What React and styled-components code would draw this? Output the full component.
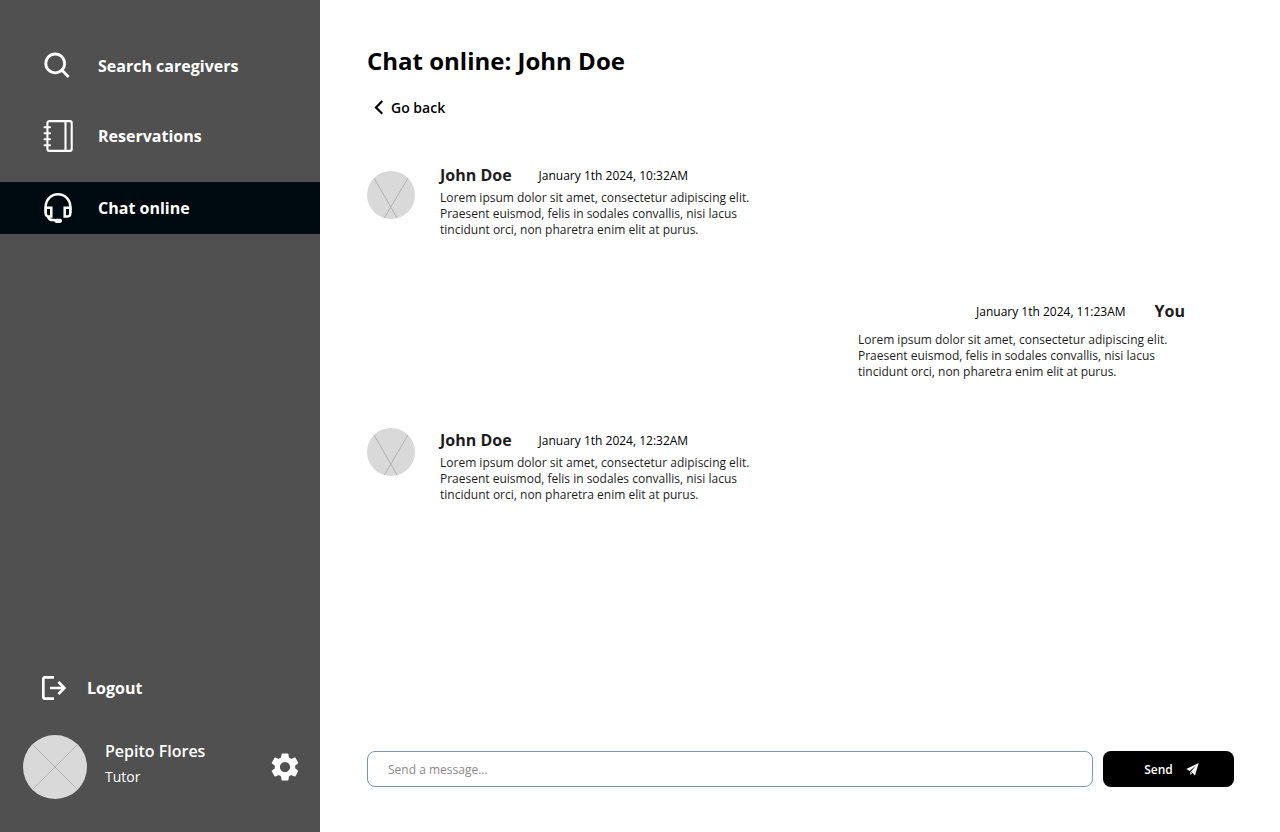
import React from "react";
import styled, { createGlobalStyle } from "styled-components";
import { MdSettings } from "react-icons/md";

const GlobalStyle = createGlobalStyle`
  *, *::before, *::after { box-sizing: border-box; }
  body {
    margin: 0;
    background: #fff;
    color: #000;
    font-family: "Open Sans", "Noto Sans", sans-serif;
  }
  button, input { font: inherit; color: inherit; }
  h1, h2, p, ul { margin: 0; padding: 0; }
  svg { display: block; flex: none; }
`;

const Page = styled.div`
  display: flex;
  min-height: 100vh;
`;

const Sidebar = styled.aside`
  flex: none;
  width: 320px;
  display: flex;
  flex-direction: column;
  justify-content: space-between;
  padding: 42px 0 33px;
  background: #505050;
  color: #fff;
`;

const NavList = styled.ul`
  list-style: none;
  display: flex;
  flex-direction: column;
  gap: 22px;
`;

const NavLink = styled.a`
  display: flex;
  align-items: center;
  gap: 24px;
  height: ${(p) => (p.$active ? "52px" : "48px")};
  padding-left: 42px;
  background: ${(p) => (p.$active ? "#000b11" : "transparent")};
  color: #fff;
  font-size: 16px;
  font-weight: 700;
  line-height: 22px;
  text-decoration: none;
`;

const SidebarFooter = styled.div`
  display: flex;
  flex-direction: column;
  gap: 35px;
`;

const LogoutButton = styled.button`
  align-self: flex-start;
  display: flex;
  align-items: center;
  gap: 21px;
  margin-left: 42px;
  padding: 0;
  border: 0;
  background: none;
  font-size: 16px;
  font-weight: 700;
  line-height: 22px;
  cursor: pointer;
`;

const Profile = styled.div`
  display: flex;
  align-items: center;
  padding: 0 18px 0 23px;
`;

const ProfileText = styled.div`
  flex: 1;
  display: flex;
  flex-direction: column;
  gap: 5px;
  padding: 0 0 7px 18px;
`;

const ProfileName = styled.p`
  font-size: 16px;
  font-weight: 600;
  line-height: 22px;
`;

const ProfileRole = styled.p`
  font-size: 14px;
  line-height: 20px;
`;

const IconButton = styled.button`
  padding: 0;
  border: 0;
  background: none;
  cursor: pointer;
`;

const Main = styled.main`
  flex: 1;
  min-width: 0;
  display: flex;
  flex-direction: column;
  padding: 45px 46px 45px 47px;
`;

const Title = styled.h1`
  font-size: 24px;
  font-weight: 700;
  line-height: 32px;
`;

const BackLink = styled.a`
  align-self: flex-start;
  display: flex;
  align-items: center;
  gap: 8px;
  margin: 21px 0 45px 7px;
  color: #000;
  font-size: 14px;
  font-weight: 600;
  line-height: 20px;
  text-decoration: none;
`;

const Thread = styled.section`
  flex: 1;
  display: flex;
  flex-direction: column;
  gap: 48px;
  padding-bottom: 48px;
`;

const Message = styled.article`
  display: flex;
  align-items: flex-start;
  gap: 25px;
  align-self: ${(p) => (p.$own ? "flex-end" : "flex-start")};
  padding: ${(p) => (p.$own ? "13px 49px 0 0" : "0")};
`;

const AvatarSlot = styled.div`
  padding-top: ${(p) => (p.$lowered ? "8px" : "0")};
`;

const MessageBody = styled.div`
  width: 327px;
  display: flex;
  flex-direction: column;
  gap: ${(p) => (p.$own ? "10px" : "4px")};
  padding-top: 1px;
  color: #1d1d1d;
`;

const MessageHeader = styled.header`
  display: flex;
  flex-direction: ${(p) => (p.$own ? "row-reverse" : "row")};
  align-items: center;
  gap: ${(p) => (p.$own ? "29px" : "27px")};
`;

const Author = styled.h2`
  font-size: 16px;
  font-weight: 700;
  line-height: 22px;
`;

const Time = styled.time`
  padding-top: 2px;
  color: #000;
  font-size: 12px;
  line-height: 16px;
`;

const MessageText = styled.p`
  font-size: 12px;
  line-height: 16px;
`;

const Composer = styled.form`
  display: flex;
  gap: 10px;
`;

const MessageInput = styled.input`
  flex: 1;
  min-width: 0;
  height: 36px;
  padding: 0 20px;
  border: 1px solid #7c97ae;
  border-radius: 8px;
  background: #fff;
  font-size: 12px;
  &::placeholder { color: #8a8a8a; opacity: 1; }
`;

const SendButton = styled.button`
  display: flex;
  align-items: center;
  justify-content: center;
  gap: 13px;
  width: 131px;
  height: 36px;
  padding: 2px 0 0 6px;
  border: 0;
  border-radius: 8px;
  background: #000;
  color: #fff;
  font-size: 12px;
  font-weight: 600;
  line-height: 16px;
  cursor: pointer;
`;

const SearchIcon = () => (
  <svg width="32" height="32" viewBox="0 0 32 32" fill="none" stroke="#fff" strokeWidth="2.8" aria-hidden="true">
    <circle cx="13.2" cy="13.4" r="9.4" />
    <path d="M19.8 20.1L26.6 26.9" />
  </svg>
);

const NotebookIcon = () => (
  <svg width="32" height="32" viewBox="0 0 32 32" fill="none" stroke="#fff" strokeWidth="2.1" aria-hidden="true">
    <rect x="5.4" y="1.1" width="24.3" height="29.8" rx="1.8" />
    <path d="M23.5 1V31" />
    <path d="M2.6 7.3H8M2.6 13.3H8M2.6 19.3H8M2.6 25.3H8" strokeLinecap="round" />
  </svg>
);

const HeadsetIcon = () => (
  <svg width="32" height="32" viewBox="0 0 32 32" fill="none" stroke="#fff" strokeWidth="2.5" aria-hidden="true">
    <path d="M3.7 21V14.6A12.2 12.2 0 0 1 28.3 14.6V21" />
    <path d="M3.7 15.8H9.3V24.4H6.5Q3.7 24.4 3.7 21.6Z" />
    <path d="M28.3 15.8H22.7V24.4H25.5Q28.3 24.4 28.3 21.6Z" />
    <path d="M6 24.6Q7 28.1 10.8 28.1H13" />
    <path d="M14.3 28.8H18" strokeWidth="4.2" strokeLinecap="round" />
  </svg>
);

const LogoutIcon = () => (
  <svg width="24" height="24" viewBox="0 0 24 24" fill="none" stroke="#fff" strokeWidth="2.7" aria-hidden="true">
    <path d="M12 1.3H3Q1.3 1.3 1.3 3V21Q1.3 22.7 3 22.7H12" />
    <path d="M8 12H22M16.4 5.9L22.3 12L16.4 18.1" />
  </svg>
);

const ChevronIcon = () => (
  <svg width="9" height="16" viewBox="0 0 9 16" fill="none" stroke="#000" strokeWidth="2.2" aria-hidden="true">
    <path d="M8.3 1L2 7.4L8.3 13.8" />
  </svg>
);

const PlaneIcon = () => (
  <svg width="13" height="14" viewBox="0 0 13 14" fill="#fff" aria-hidden="true">
    <path d="M12.7 0L0.3 6L3.6 8L10.6 2.1L4.9 8.6L9 12.4Z" />
    <path d="M4 8.4L6 10.2L4.6 11.9Z" />
  </svg>
);

const ProfileAvatar = () => (
  <svg width="64" height="64" viewBox="0 0 64 64" role="img" aria-label="Pepito Flores">
    <circle cx="32" cy="32" r="32" fill="#d9d9d9" />
    <path d="M9.4 9.4L54.6 54.6M54.6 9.4L9.4 54.6" stroke="#b0b0b0" strokeWidth="1" />
  </svg>
);

const ContactAvatar = () => (
  <svg width="48" height="48" viewBox="0 0 48 48" role="img" aria-label="John Doe">
    <circle cx="24" cy="24" r="24" fill="#d9d9d9" />
    <path d="M7 7L30.2 47.2M41 7L17.2 47.2" stroke="#b0b0b0" strokeWidth="1" />
  </svg>
);

const navItems = [
  { label: "Search caregivers", Icon: SearchIcon },
  { label: "Reservations", Icon: NotebookIcon },
  { label: "Chat online", Icon: HeadsetIcon, active: true },
];

const lorem =
  "Lorem ipsum dolor sit amet, consectetur adipiscing elit. Praesent euismod, felis in sodales convallis, nisi lacus tincidunt orci, non pharetra enim elit at purus.";

const messages = [
  { author: "John Doe", time: "January 1th 2024, 10:32AM", lowered: true },
  { author: "You", time: "January 1th 2024, 11:23AM", own: true },
  { author: "John Doe", time: "January 1th 2024, 12:32AM" },
];

export default function App() {
  return (
    <Page>
      <GlobalStyle />
      <Sidebar>
        <nav>
          <NavList>
            {navItems.map(({ label, Icon, active }) => (
              <li key={label}>
                <NavLink href="#" $active={active} aria-current={active ? "page" : undefined}>
                  <Icon />
                  {label}
                </NavLink>
              </li>
            ))}
          </NavList>
        </nav>
        <SidebarFooter>
          <LogoutButton type="button">
            <LogoutIcon />
            Logout
          </LogoutButton>
          <Profile>
            <ProfileAvatar />
            <ProfileText>
              <ProfileName>Pepito Flores</ProfileName>
              <ProfileRole>Tutor</ProfileRole>
            </ProfileText>
            <IconButton type="button" aria-label="Settings">
              <MdSettings size={34} />
            </IconButton>
          </Profile>
        </SidebarFooter>
      </Sidebar>
      <Main>
        <Title>Chat online: John Doe</Title>
        <BackLink href="#">
          <ChevronIcon />
          Go back
        </BackLink>
        <Thread>
          {messages.map(({ author, time, own, lowered }) => (
            <Message key={time} $own={own}>
              {!own && (
                <AvatarSlot $lowered={lowered}>
                  <ContactAvatar />
                </AvatarSlot>
              )}
              <MessageBody $own={own}>
                <MessageHeader $own={own}>
                  <Author>{author}</Author>
                  <Time>{time}</Time>
                </MessageHeader>
                <MessageText>{lorem}</MessageText>
              </MessageBody>
            </Message>
          ))}
        </Thread>
        <Composer onSubmit={(e) => e.preventDefault()}>
          <MessageInput type="text" aria-label="Message" placeholder="Send a message..." />
          <SendButton type="submit">
            Send
            <PlaneIcon />
          </SendButton>
        </Composer>
      </Main>
    </Page>
  );
}
